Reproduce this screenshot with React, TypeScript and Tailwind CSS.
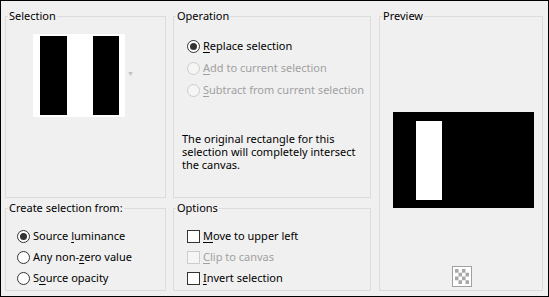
import React from 'react';

const U = ({ children }: { children: React.ReactNode }) => <span className="underline underline-offset-[2px]">{children}</span>;

const Radio = ({ checked = false, disabled = false }: { checked?: boolean; disabled?: boolean }) => (
  <span
    className={`flex h-[13px] w-[13px] shrink-0 items-center justify-center rounded-full border ${
      disabled ? 'border-[#cccccc] bg-[#f5f5f5]' : 'border-[#333333] bg-white'
    }`}
  >
    {checked && <span className="h-[7px] w-[7px] rounded-full bg-[#333333]" />}
  </span>
);

const Check = ({ disabled = false }: { disabled?: boolean }) => (
  <span
    className={`h-[13px] w-[13px] shrink-0 border ${disabled ? 'border-[#cccccc] bg-[#f5f5f5]' : 'border-[#333333] bg-white'}`}
  />
);

const Group = ({ title, className, children }: { title: string; className: string; children?: React.ReactNode }) => (
  <fieldset className={`border border-[#dcdcdc] ${className}`}>
    <legend className="ml-[2px] px-[1px] leading-[16px]">{title}</legend>
    {children}
  </fieldset>
);

const App = () => {
  return (
    <div className="flex h-[297px] w-[549px] whitespace-nowrap border border-black bg-[#f0f0f0] pl-[4px] pt-[7px] font-['Noto_Sans',sans-serif] text-[11px] text-black">
      <div className="flex w-[161px] flex-col gap-[2px]">
        <Group title="Selection" className="h-[190px]">
          <div className="ml-[27px] mt-[10px] flex items-center">
            <div className="flex h-[83px] w-[92px] items-center bg-white pl-[7px]">
              <div className="flex h-[79px] w-[79px]">
                <div className="w-[27px] bg-black" />
                <div className="w-[26px] bg-white" />
                <div className="w-[26px] bg-black" />
              </div>
            </div>
            <span className="ml-[2px] mt-[-4px] text-[7px] leading-none text-[#c0c0c0]">▼</span>
          </div>
        </Group>
        <Group title="Create selection from:" className="h-[91px]">
          <div className="ml-[11px] mt-[12px] flex flex-col gap-[4px]">
            <label className="flex h-[17px] items-center gap-[3px]">
              <Radio checked />
              <span>Source <U>l</U>uminance</span>
            </label>
            <label className="flex h-[17px] items-center gap-[3px]">
              <Radio />
              <span>Any non-<U>z</U>ero value</span>
            </label>
            <label className="flex h-[17px] items-center gap-[3px]">
              <Radio />
              <span>S<U>o</U>urce opacity</span>
            </label>
          </div>
        </Group>
      </div>

      <div className="ml-[7px] flex w-[198px] flex-col gap-[2px]">
        <Group title="Operation" className="h-[190px]">
          <div className="ml-[13px] mt-[14px] flex flex-col gap-[5px]">
            <label className="flex h-[17px] items-center gap-[3px]">
              <Radio checked />
              <span><U>R</U>eplace selection</span>
            </label>
            <label className="flex h-[17px] items-center gap-[3px] text-[#a0a0a0]">
              <Radio disabled />
              <span><U>A</U>dd to current selection</span>
            </label>
            <label className="flex h-[17px] items-center gap-[3px] text-[#a0a0a0]">
              <Radio disabled />
              <span><U>S</U>ubtract from current selection</span>
            </label>
          </div>
          <p className="ml-[8px] mt-[33px] w-[182px] whitespace-normal leading-[13px]">
            The original rectangle for this
            <br />
            selection will completely intersect
            <br />
            the canvas.
          </p>
        </Group>
        <Group title="Options" className="h-[91px]">
          <div className="ml-[13px] mt-[12px] flex flex-col gap-[4px]">
            <label className="flex h-[17px] items-center gap-[3px]">
              <Check />
              <span><U>M</U>ove to upper left</span>
            </label>
            <label className="flex h-[17px] items-center gap-[3px] text-[#a0a0a0]">
              <Check disabled />
              <span><U>C</U>lip to canvas</span>
            </label>
            <label className="flex h-[17px] items-center gap-[3px]">
              <Check />
              <span><U>I</U>nvert selection</span>
            </label>
          </div>
        </Group>
      </div>

      <div className="ml-[8px] w-[164px]">
        <Group title="Preview" className="flex h-[283px] flex-col items-center">
          <div className="mt-[88px] ml-[4px] h-[96px] w-[141px] bg-black pl-[23px] pt-[9px]">
            <div className="h-[79px] w-[26px] bg-white" />
          </div>
          <svg className="mt-[58px] ml-[2px]" width="20" height="21" viewBox="0 0 20 21">
            <rect x="0.5" y="0.5" width="19" height="20" fill="#ffffff" stroke="#a0a0a0" />
            {[0, 1, 2, 3].map((r) =>
              [0, 1, 2, 3].map((c) =>
                (r + c) % 2 === 0 ? (
                  <rect key={`${r}-${c}`} x={3 + c * 3.5} y={3 + r * 3.75} width="3.5" height="3.75" fill="#a8a8a8" />
                ) : null
              )
            )}
          </svg>
        </Group>
      </div>
    </div>
  );
};

export default App;
